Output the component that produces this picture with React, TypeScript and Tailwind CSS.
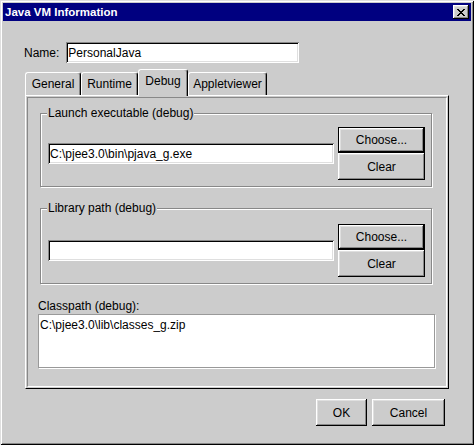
import React from 'react';

// classic 3D bevels
const raised =
  'shadow-[inset_-1px_-1px_#000,inset_1px_1px_#fff,inset_-2px_-2px_#888,inset_2px_2px_#dfdfdf]';
const sunken =
  'shadow-[inset_1px_1px_#888,inset_-1px_-1px_#fff,inset_2px_2px_#000,inset_-2px_-2px_#dfdfdf]';

const CloseGlyph = () => {
  const rows = ['11000011', '01100110', '00111100', '00011000', '00111100', '01100110', '11000011'];
  return (
    <svg width="8" height="7" viewBox="0 0 8 7" shapeRendering="crispEdges">
      {rows.map((r, y) =>
        r.split('').map((c, x) => (c === '1' ? <rect key={`${x}-${y}`} x={x} y={y} width="1" height="1" fill="#000" /> : null))
      )}
    </svg>
  );
};

const Button = ({ label, className, isDefault }: { label: string; className: string; isDefault?: boolean }) =>
  isDefault ? (
    <div className={`border border-black ${className}`}>
      <div className={`h-full flex items-center justify-center ${raised}`}>{label}</div>
    </div>
  ) : (
    <div className={`flex items-center justify-center ${raised} ${className}`}>{label}</div>
  );

const TextField = ({ value, className }: { value: string; className: string }) => (
  <div className={`bg-white flex items-center pl-[2px] ${sunken} ${className}`}>{value}</div>
);

const Tab = ({ label, width, active }: { label: string; width: string; active?: boolean }) => (
  <div
    className={`${width} ${
      active ? 'h-[27px] -mb-[1px] pb-[4px] relative z-10' : 'h-[23px] pb-[1px]'
    } bg-[#cccccc] border-l border-t border-white border-r border-r-black rounded-t-[3px] shadow-[inset_-1px_0_#888] flex items-center justify-center`}
  >
    {label}
  </div>
);

const GroupBox = ({ title, value, top }: { title: string; value: string; top: string }) => (
  <div
    className={`relative w-[392px] ml-[12px] border border-[#888] shadow-[1px_1px_#fff,inset_1px_1px_#fff] flex items-center pl-[7px] ${top} pb-[6px]`}
  >
    <span className="absolute left-[6px] -top-[8px] px-[1px] bg-[#cccccc] leading-[14px]">{title}</span>
    <TextField value={value} className="w-[286px] h-[21px]" />
    <div className="ml-[4px] flex flex-col">
      <Button label="Choose..." isDefault className="w-[87px] h-[26px]" />
      <Button label="Clear" className="w-[87px] h-[27px]" />
    </div>
  </div>
);

export default function App() {
  return (
    <div
      className={`w-[474px] h-[445px] bg-[#cccccc] p-[3px] flex flex-col text-[12px] leading-[14px] text-black font-['Liberation_Sans',Arial,sans-serif] shadow-[inset_1px_1px_#dfdfdf,inset_-1px_-1px_#000,inset_2px_2px_#fff,inset_-2px_-2px_#888]`}
    >
      {/* title bar */}
      <div className="h-[18px] bg-[#000080] flex items-center justify-between pl-[2px] pr-[2px]">
        <span className="text-white font-bold text-[11.5px]">Java VM Information</span>
        <div className={`w-[16px] h-[14px] bg-[#cccccc] flex items-center justify-center ${raised}`}>
          <CloseGlyph />
        </div>
      </div>

      {/* name */}
      <div className="mt-[21px] pl-[21px] flex items-center gap-[7px]">
        <span>Name:</span>
        <TextField value="PersonalJava" className="w-[233px] h-[21px]" />
      </div>

      {/* tabs */}
      <div className="mt-[6px] pl-[22px] h-[26px] flex items-end">
        <Tab label="General" width="w-[56px]" />
        <Tab label="Runtime" width="w-[57px]" />
        <Tab label="Debug" width="w-[50px]" active />
        <Tab label="Appletviewer" width="w-[79px]" />
      </div>

      {/* tab page */}
      <div className="ml-[22px] w-[424px] h-[294px] border border-t-white border-l-white border-r-black border-b-black p-[1px]">
        <div className="h-full border border-t-[#888] border-l-[#888] border-r-white border-b-white flex flex-col">
          <div className="mt-[15px]">
            <GroupBox title="Launch executable (debug)" value="C:\pjee3.0\bin\pjava_g.exe" top="pt-[13px]" />
          </div>
          <div className="mt-[21px]">
            <GroupBox title="Library path (debug)" value="" top="pt-[15px]" />
          </div>
          <span className="mt-[15px] ml-[10px]">Classpath (debug):</span>
          <div className="mt-[1px] ml-[10px] w-[397px] h-[54px] bg-white border border-[#999] shadow-[1px_1px_#fff] pl-[1px] pt-[3px]">
            C:\pjee3.0\lib\classes_g.zip
          </div>
        </div>
      </div>

      {/* dialog buttons */}
      <div className="mt-[10px] pr-[26px] flex justify-end gap-[5px]">
        <Button label="OK" className="w-[51px] h-[27px]" />
        <Button label="Cancel" className="w-[73px] h-[27px]" />
      </div>
    </div>
  );
}
